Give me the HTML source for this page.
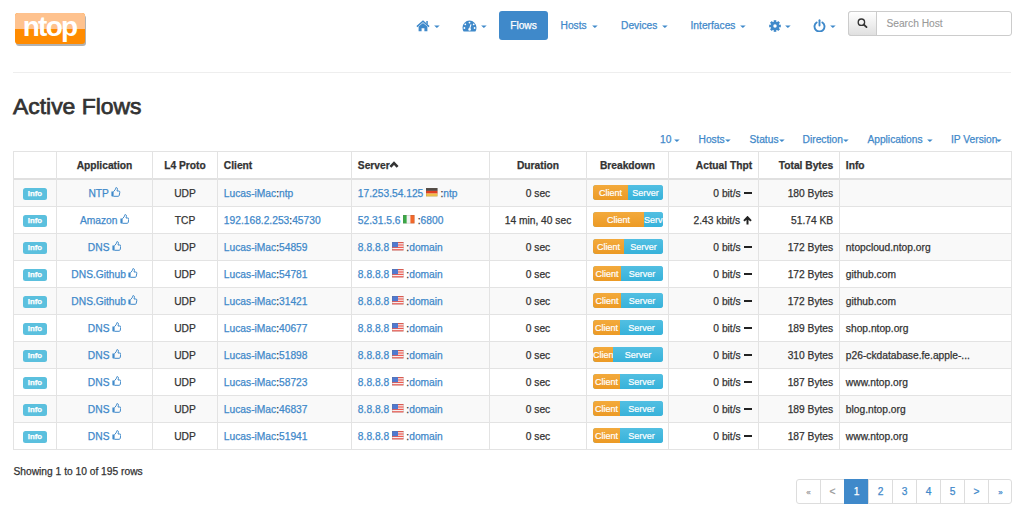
<!DOCTYPE html>
<html><head><meta charset="utf-8"><style>
html,body{margin:0;padding:0;background:#fff;width:1024px;height:511px;overflow:hidden;position:relative;font-family:"Liberation Sans",sans-serif}
.t{position:absolute;white-space:nowrap;-webkit-text-stroke:0.25px currentColor}
.r{position:absolute}
.lbl{position:absolute;width:24px;height:12.4px;border-radius:2.5px;background:#5bc0de;color:#fff;font-weight:bold;font-size:7.8px;line-height:12.4px;-webkit-text-stroke:0.25px #fff;text-align:center;font-family:"Liberation Sans",sans-serif}
.flag{display:inline-block;position:relative;width:11.5px;height:8.4px;vertical-align:1.3px;border-radius:1px;box-shadow:0 0 0 0.5px rgba(120,110,100,.35)}
.minus{display:inline-block;width:8px;height:2.4px;background:#222;vertical-align:2.5px;margin-left:3.5px}
.bar{position:absolute;width:70px;height:14.7px;border-radius:3px;overflow:hidden;background:#5bc0de}
.cli,.srv{position:absolute;top:0;height:14.7px;overflow:hidden;color:#fff;font-size:9px;line-height:16px;-webkit-text-stroke:0.2px #fff;text-align:center;white-space:nowrap}
.cli{left:0;background:linear-gradient(#f3aa3c,#ec9a25)}
.srv{background:linear-gradient(#52bfe2,#37b2da)}
.cli span,.srv span{display:inline-block}
</style></head><body>
<div class="r" style="left:16.3px;top:14.6px;width:70px;height:31px;border-radius:3px;background:#8a8a8a;filter:blur(0.6px);opacity:.65"></div>
<div class="r" style="left:15px;top:13px;width:70px;height:31px;border-radius:3px;overflow:hidden;background:#ff8b00">
<div class="r" style="left:0;top:0;width:70px;height:16px;background:#fec28e"></div>
<div class="t" style="left:7.6px;top:-3.2px;width:54px;font-size:28px;line-height:34px;font-weight:bold;color:#fff;letter-spacing:-1.7px;text-align:center;-webkit-text-stroke:0">ntop</div>
</div><div class="r" style="left:499px;top:11px;width:49px;height:29px;border-radius:3px;background:#3f89ca"></div><div class="t" style="left:493.50px;width:60px;text-align:center;top:16.15px;font-size:10.24px;line-height:20px;color:#fff;font-weight:normal;">Flows</div><div class="t" style="left:560.50px;top:16.15px;font-size:10.24px;line-height:20px;color:#3f89ca;font-weight:normal;">Hosts</div><div class="t" style="left:621.00px;top:16.15px;font-size:10.24px;line-height:20px;color:#3f89ca;font-weight:normal;">Devices</div><div class="t" style="left:690.50px;top:16.15px;font-size:10.24px;line-height:20px;color:#3f89ca;font-weight:normal;">Interfaces</div><svg class="r" style="left:433.8px;top:25px" width="6" height="4" viewBox="0 0 6 4"><path d="M0.1 0.4 H5.7 L2.9 3.1 Z" fill="#3f89ca"/></svg><svg class="r" style="left:481.3px;top:25px" width="6" height="4" viewBox="0 0 6 4"><path d="M0.1 0.4 H5.7 L2.9 3.1 Z" fill="#3f89ca"/></svg><svg class="r" style="left:591.5px;top:25px" width="6" height="4" viewBox="0 0 6 4"><path d="M0.1 0.4 H5.7 L2.9 3.1 Z" fill="#3f89ca"/></svg><svg class="r" style="left:661.8px;top:25px" width="6" height="4" viewBox="0 0 6 4"><path d="M0.1 0.4 H5.7 L2.9 3.1 Z" fill="#3f89ca"/></svg><svg class="r" style="left:739.5999999999999px;top:25px" width="6" height="4" viewBox="0 0 6 4"><path d="M0.1 0.4 H5.7 L2.9 3.1 Z" fill="#3f89ca"/></svg><svg class="r" style="left:785.0px;top:25px" width="6" height="4" viewBox="0 0 6 4"><path d="M0.1 0.4 H5.7 L2.9 3.1 Z" fill="#3f89ca"/></svg><svg class="r" style="left:830.0999999999999px;top:25px" width="6" height="4" viewBox="0 0 6 4"><path d="M0.1 0.4 H5.7 L2.9 3.1 Z" fill="#3f89ca"/></svg><svg class="r" style="left:416px;top:20px" width="14" height="12" viewBox="0 0 14 12">
<path d="M0.9 6.6 L7 1.3 L13.1 6.6" stroke="#3f89ca" stroke-width="1.5" fill="none" stroke-linejoin="miter"/>
<path d="M10.3 1 H11.8 V4.6 L10.3 3.3 Z" fill="#3f89ca"/>
<path d="M2.6 6.6 L7 2.9 L11.4 6.6 V11.3 H8.4 V8.3 H5.6 V11.3 H2.6 Z" fill="#3f89ca"/></svg><svg class="r" style="left:462px;top:20px" width="15" height="12" viewBox="0 0 15 12">
<path d="M7.5 0.6 A7 7 0 0 0 0.5 7.6 Q0.5 9.8 1.6 11.4 H13.4 Q14.5 9.8 14.5 7.6 A7 7 0 0 0 7.5 0.6 Z" fill="#3f89ca"/>
<circle cx="7.5" cy="2.6" r="0.9" fill="#fff"/><circle cx="3.3" cy="4.3" r="0.9" fill="#fff"/><circle cx="11.7" cy="4.3" r="0.9" fill="#fff"/>
<circle cx="2.4" cy="8" r="0.9" fill="#fff"/><circle cx="12.6" cy="8" r="0.9" fill="#fff"/>
<path d="M9.0 4.3 L7.7 8.6" stroke="#fff" stroke-width="1.1"/><circle cx="7.6" cy="9.4" r="1.3" fill="#fff"/></svg><svg class="r" style="left:768.5px;top:19.8px" width="12" height="12" viewBox="-6.5 -6.5 13 13">
<g fill="#3f89ca"><rect x="-1.4" y="-6.3" width="2.8" height="3" transform="rotate(0)"/><rect x="-1.4" y="-6.3" width="2.8" height="3" transform="rotate(45)"/><rect x="-1.4" y="-6.3" width="2.8" height="3" transform="rotate(90)"/><rect x="-1.4" y="-6.3" width="2.8" height="3" transform="rotate(135)"/><rect x="-1.4" y="-6.3" width="2.8" height="3" transform="rotate(180)"/><rect x="-1.4" y="-6.3" width="2.8" height="3" transform="rotate(225)"/><rect x="-1.4" y="-6.3" width="2.8" height="3" transform="rotate(270)"/><rect x="-1.4" y="-6.3" width="2.8" height="3" transform="rotate(315)"/>
<circle r="4.6"/></g><circle r="1.9" fill="#fff"/></svg><svg class="r" style="left:813px;top:19px" width="13" height="13" viewBox="0 0 13 13">
<path d="M3.6 3.4 A5 5 0 1 0 9.4 3.4" stroke="#3f89ca" stroke-width="1.9" fill="none" stroke-linecap="round"/>
<path d="M6.5 1.2 V6.6" stroke="#3f89ca" stroke-width="1.9" stroke-linecap="round"/></svg><div class="r" style="left:848px;top:11px;width:164px;height:25px;border:1px solid #ccc;border-radius:3px;box-sizing:border-box;background:#fff"></div>
<div class="r" style="left:848px;top:11px;width:29px;height:25px;border:1px solid #ccc;border-radius:3px 0 0 3px;box-sizing:border-box;background:linear-gradient(#fff,#e0e0e0)"></div><svg class="r" style="left:857px;top:18px" width="11" height="10" viewBox="0 0 11 10">
<circle cx="4.4" cy="4.2" r="3.2" stroke="#333" stroke-width="1.35" fill="none"/><path d="M6.7 6.5 L9.5 9.1" stroke="#333" stroke-width="1.8" stroke-linecap="round"/></svg><div class="t" style="left:886.40px;top:14.05px;font-size:10.24px;line-height:20px;color:#999;font-weight:normal;-webkit-text-stroke:0.1px #999;">Search Host</div><div class="r" style="left:13px;top:72px;width:998px;height:1px;background:#eee;"></div><div class="t" style="left:13.00px;top:96.07px;font-size:22.9px;line-height:20px;color:#333;font-weight:normal;-webkit-text-stroke:0.75px #333;">Active Flows</div><div class="t" style="left:660.00px;top:129.55px;font-size:10.24px;line-height:20px;color:#3f89ca;font-weight:normal;">10</div><svg class="r" style="left:673.8px;top:138.5px" width="6" height="4" viewBox="0 0 6 4"><path d="M0.1 0.4 H5.7 L2.9 3.1 Z" fill="#3f89ca"/></svg><div class="t" style="left:698.50px;top:129.55px;font-size:10.24px;line-height:20px;color:#3f89ca;font-weight:normal;">Hosts</div><svg class="r" style="left:724.8px;top:138.5px" width="6" height="4" viewBox="0 0 6 4"><path d="M0.1 0.4 H5.7 L2.9 3.1 Z" fill="#3f89ca"/></svg><div class="t" style="left:749.50px;top:129.55px;font-size:10.24px;line-height:20px;color:#3f89ca;font-weight:normal;">Status</div><svg class="r" style="left:778.8px;top:138.5px" width="6" height="4" viewBox="0 0 6 4"><path d="M0.1 0.4 H5.7 L2.9 3.1 Z" fill="#3f89ca"/></svg><div class="t" style="left:802.60px;top:129.55px;font-size:10.24px;line-height:20px;color:#3f89ca;font-weight:normal;">Direction</div><svg class="r" style="left:843.3px;top:138.5px" width="6" height="4" viewBox="0 0 6 4"><path d="M0.1 0.4 H5.7 L2.9 3.1 Z" fill="#3f89ca"/></svg><div class="t" style="left:867.40px;top:129.55px;font-size:10.24px;line-height:20px;color:#3f89ca;font-weight:normal;">Applications</div><svg class="r" style="left:926.8px;top:138.5px" width="6" height="4" viewBox="0 0 6 4"><path d="M0.1 0.4 H5.7 L2.9 3.1 Z" fill="#3f89ca"/></svg><div class="t" style="left:951.00px;top:129.55px;font-size:10.24px;line-height:20px;color:#3f89ca;font-weight:normal;">IP Version</div><svg class="r" style="left:995.8px;top:138.5px" width="6" height="4" viewBox="0 0 6 4"><path d="M0.1 0.4 H5.7 L2.9 3.1 Z" fill="#3f89ca"/></svg><div class="r" style="left:14px;top:180px;width:997px;height:26px;background:#f9f9f9;"></div><div class="r" style="left:14px;top:234px;width:997px;height:26px;background:#f9f9f9;"></div><div class="r" style="left:14px;top:288px;width:997px;height:26px;background:#f9f9f9;"></div><div class="r" style="left:14px;top:342px;width:997px;height:26px;background:#f9f9f9;"></div><div class="r" style="left:14px;top:396px;width:997px;height:26px;background:#f9f9f9;"></div><div class="r" style="left:13px;top:151px;width:999px;height:1px;background:#e3e3e3;"></div><div class="r" style="left:13px;top:178px;width:999px;height:2px;background:#e0e0e0;"></div><div class="r" style="left:13px;top:206px;width:999px;height:1px;background:#e3e3e3;"></div><div class="r" style="left:13px;top:233px;width:999px;height:1px;background:#e3e3e3;"></div><div class="r" style="left:13px;top:260px;width:999px;height:1px;background:#e3e3e3;"></div><div class="r" style="left:13px;top:287px;width:999px;height:1px;background:#e3e3e3;"></div><div class="r" style="left:13px;top:314px;width:999px;height:1px;background:#e3e3e3;"></div><div class="r" style="left:13px;top:341px;width:999px;height:1px;background:#e3e3e3;"></div><div class="r" style="left:13px;top:368px;width:999px;height:1px;background:#e3e3e3;"></div><div class="r" style="left:13px;top:395px;width:999px;height:1px;background:#e3e3e3;"></div><div class="r" style="left:13px;top:422px;width:999px;height:1px;background:#e3e3e3;"></div><div class="r" style="left:13px;top:449px;width:999px;height:1px;background:#e3e3e3;"></div><div class="r" style="left:13px;top:151px;width:1px;height:299px;background:#e3e3e3;"></div><div class="r" style="left:56px;top:151px;width:1px;height:299px;background:#e3e3e3;"></div><div class="r" style="left:152px;top:151px;width:1px;height:299px;background:#e3e3e3;"></div><div class="r" style="left:217px;top:151px;width:1px;height:299px;background:#e3e3e3;"></div><div class="r" style="left:351px;top:151px;width:1px;height:299px;background:#e3e3e3;"></div><div class="r" style="left:489px;top:151px;width:1px;height:299px;background:#e3e3e3;"></div><div class="r" style="left:586px;top:151px;width:1px;height:299px;background:#e3e3e3;"></div><div class="r" style="left:668px;top:151px;width:1px;height:299px;background:#e3e3e3;"></div><div class="r" style="left:758px;top:151px;width:1px;height:299px;background:#e3e3e3;"></div><div class="r" style="left:839px;top:151px;width:1px;height:299px;background:#e3e3e3;"></div><div class="r" style="left:1011px;top:151px;width:1px;height:299px;background:#e3e3e3;"></div><div class="t" style="left:44.50px;width:120px;text-align:center;top:155.75px;font-size:10.24px;line-height:20px;color:#333;font-weight:bold;">Application</div><div class="t" style="left:125.00px;width:120px;text-align:center;top:155.75px;font-size:10.24px;line-height:20px;color:#333;font-weight:bold;">L4 Proto</div><div class="t" style="left:223.85px;top:155.75px;font-size:10.24px;line-height:20px;color:#333;font-weight:bold;">Client</div><div class="t" style="left:357.85px;top:155.75px;font-size:10.24px;line-height:20px;color:#333;font-weight:bold;">Server</div><svg class="r" style="left:389px;top:160px" width="10" height="9" viewBox="0 0 10 9"><path d="M1.4 6.9 L5 3.1 L8.6 6.9" stroke="#333" stroke-width="2.6" fill="none"/></svg><div class="t" style="left:478.00px;width:120px;text-align:center;top:155.75px;font-size:10.24px;line-height:20px;color:#333;font-weight:bold;">Duration</div><div class="t" style="left:567.50px;width:120px;text-align:center;top:155.75px;font-size:10.24px;line-height:20px;color:#333;font-weight:bold;">Breakdown</div><div class="t" style="right:271.85px;text-align:right;top:155.75px;font-size:10.24px;line-height:20px;color:#333;font-weight:bold;">Actual Thpt</div><div class="t" style="right:190.85px;text-align:right;top:155.75px;font-size:10.24px;line-height:20px;color:#333;font-weight:bold;">Total Bytes</div><div class="t" style="left:845.85px;top:155.75px;font-size:10.24px;line-height:20px;color:#333;font-weight:bold;">Info</div><div class="lbl" style="left:23px;top:187.6px">Info</div><div class="t" style="left:44.50px;width:120px;text-align:center;top:183.75px;font-size:10.24px;line-height:20px;color:#3f89ca;font-weight:normal;">NTP<svg width="9.5" height="10" viewBox="0 0 9.5 10" style="vertical-align:0px;margin-left:2.2px"><path d="M2.5 4.7 L4.1 2.8 Q4.7 2.0 4.7 1.2 Q4.7 0.5 5.4 0.6 Q6.7 0.9 6.4 2.5 L6.0 4.0 H7.9 Q9.0 4.1 8.8 5.3 L8.2 8.5 Q8.0 9.3 7.1 9.3 H2.5" stroke="#3f89ca" stroke-width="1" fill="none" stroke-linejoin="round"/><path d="M0.4 4.4 H2.6 V9.5 H1.2 Q0.4 9.5 0.4 8.7 Z" fill="#3f89ca"/></svg></div><div class="t" style="left:145.00px;width:80px;text-align:center;top:183.75px;font-size:10.24px;line-height:20px;color:#333;font-weight:normal;">UDP</div><div class="t" style="left:223.85px;top:183.75px;font-size:10.24px;line-height:20px;color:#333;font-weight:normal;"><span style="color:#3f89ca">Lucas-iMac</span>:<span style="color:#3f89ca">ntp</span></div><div class="t" style="left:357.85px;top:183.75px;font-size:10.24px;line-height:20px;color:#333;font-weight:normal;"><span style="color:#3f89ca">17.253.54.125</span> <svg width="11.5" height="8.4" viewBox="0 0 11.5 8.4" style="vertical-align:0px"><rect x="0" y="0" width="11.5" height="2.9" fill="#514a45"/><rect x="0" y="2.9" width="11.5" height="2.7" fill="#e23f22"/><rect x="0" y="5.6" width="11.5" height="2.8" fill="#f0c04a"/><rect x="0.25" y="0.25" width="11" height="7.9" fill="none" stroke="rgba(110,100,90,.35)" stroke-width="0.5"/></svg> :<span style="color:#3f89ca">ntp</span></div><div class="t" style="left:478.00px;width:120px;text-align:center;top:183.75px;font-size:10.24px;line-height:20px;color:#333;font-weight:normal;">0 sec</div><div class="bar" style="left:593px;top:185.3px"><div class="cli" style="width:35px"><span>Client</span></div><div class="srv" style="left:35px;width:35px"><span>Server</span></div></div><div class="t" style="right:271.85px;text-align:right;top:183.75px;font-size:10.24px;line-height:20px;color:#333;font-weight:normal;">0 bit/s<span class="minus"></span></div><div class="t" style="right:190.85px;text-align:right;top:183.75px;font-size:10.24px;line-height:20px;color:#333;font-weight:normal;">180 Bytes</div><div class="t" style="left:845.85px;top:183.75px;font-size:10.24px;line-height:20px;color:#333;font-weight:normal;"></div><div class="lbl" style="left:23px;top:214.6px">Info</div><div class="t" style="left:44.50px;width:120px;text-align:center;top:210.75px;font-size:10.24px;line-height:20px;color:#3f89ca;font-weight:normal;">Amazon<svg width="9.5" height="10" viewBox="0 0 9.5 10" style="vertical-align:0px;margin-left:2.2px"><path d="M2.5 4.7 L4.1 2.8 Q4.7 2.0 4.7 1.2 Q4.7 0.5 5.4 0.6 Q6.7 0.9 6.4 2.5 L6.0 4.0 H7.9 Q9.0 4.1 8.8 5.3 L8.2 8.5 Q8.0 9.3 7.1 9.3 H2.5" stroke="#3f89ca" stroke-width="1" fill="none" stroke-linejoin="round"/><path d="M0.4 4.4 H2.6 V9.5 H1.2 Q0.4 9.5 0.4 8.7 Z" fill="#3f89ca"/></svg></div><div class="t" style="left:145.00px;width:80px;text-align:center;top:210.75px;font-size:10.24px;line-height:20px;color:#333;font-weight:normal;">TCP</div><div class="t" style="left:223.85px;top:210.75px;font-size:10.24px;line-height:20px;color:#333;font-weight:normal;"><span style="color:#3f89ca">192.168.2.253</span>:<span style="color:#3f89ca">45730</span></div><div class="t" style="left:357.85px;top:210.75px;font-size:10.24px;line-height:20px;color:#333;font-weight:normal;"><span style="color:#3f89ca">52.31.5.6</span> <svg width="11.5" height="8.4" viewBox="0 0 11.5 8.4" style="vertical-align:0px"><rect x="0" y="0" width="3.8" height="8.4" fill="#3aa845"/><rect x="3.8" y="0" width="3.6" height="8.4" fill="#f2f2f2"/><rect x="7.4" y="0" width="4.1" height="8.4" fill="#f2672a"/><rect x="0.25" y="0.25" width="11" height="7.9" fill="none" stroke="rgba(110,100,90,.35)" stroke-width="0.5"/></svg> :<span style="color:#3f89ca">6800</span></div><div class="t" style="left:478.00px;width:120px;text-align:center;top:210.75px;font-size:10.24px;line-height:20px;color:#333;font-weight:normal;">14 min, 40 sec</div><div class="bar" style="left:593px;top:212.3px"><div class="cli" style="width:51px"><span>Client</span></div><div class="srv" style="left:51px;width:19px"><span>Server</span></div></div><div class="t" style="right:271.85px;text-align:right;top:210.75px;font-size:10.24px;line-height:20px;color:#333;font-weight:normal;">2.43 kbit/s<svg width="9" height="9" viewBox="0 0 9 9" style="vertical-align:-1px;margin-left:3px"><path d="M4.5 8.6 V1.8 M1 4.9 L4.5 1.2 L8 4.9" stroke="#222" stroke-width="2" fill="none"/></svg></div><div class="t" style="right:190.85px;text-align:right;top:210.75px;font-size:10.24px;line-height:20px;color:#333;font-weight:normal;">51.74 KB</div><div class="t" style="left:845.85px;top:210.75px;font-size:10.24px;line-height:20px;color:#333;font-weight:normal;"></div><div class="lbl" style="left:23px;top:241.6px">Info</div><div class="t" style="left:44.50px;width:120px;text-align:center;top:237.75px;font-size:10.24px;line-height:20px;color:#3f89ca;font-weight:normal;">DNS<svg width="9.5" height="10" viewBox="0 0 9.5 10" style="vertical-align:0px;margin-left:2.2px"><path d="M2.5 4.7 L4.1 2.8 Q4.7 2.0 4.7 1.2 Q4.7 0.5 5.4 0.6 Q6.7 0.9 6.4 2.5 L6.0 4.0 H7.9 Q9.0 4.1 8.8 5.3 L8.2 8.5 Q8.0 9.3 7.1 9.3 H2.5" stroke="#3f89ca" stroke-width="1" fill="none" stroke-linejoin="round"/><path d="M0.4 4.4 H2.6 V9.5 H1.2 Q0.4 9.5 0.4 8.7 Z" fill="#3f89ca"/></svg></div><div class="t" style="left:145.00px;width:80px;text-align:center;top:237.75px;font-size:10.24px;line-height:20px;color:#333;font-weight:normal;">UDP</div><div class="t" style="left:223.85px;top:237.75px;font-size:10.24px;line-height:20px;color:#333;font-weight:normal;"><span style="color:#3f89ca">Lucas-iMac</span>:<span style="color:#3f89ca">54859</span></div><div class="t" style="left:357.85px;top:237.75px;font-size:10.24px;line-height:20px;color:#333;font-weight:normal;"><span style="color:#3f89ca">8.8.8.8</span> <svg width="11.5" height="8.4" viewBox="0 0 11.5 8.4" style="vertical-align:0px"><rect x="0" y="0" width="11.5" height="8.4" fill="#f6eeee"/><rect x="0" y="0" width="11.5" height="1.2" fill="#ee5a50"/><rect x="0" y="2.4" width="11.5" height="1.2" fill="#ee5a50"/><rect x="0" y="4.8" width="11.5" height="1.2" fill="#ee5a50"/><rect x="0" y="7.2" width="11.5" height="1.2" fill="#ee5a50"/><rect x="0" y="0" width="6" height="5.2" fill="#5079d0"/><rect x="0.25" y="0.25" width="11" height="7.9" fill="none" stroke="rgba(110,100,90,.35)" stroke-width="0.5"/></svg> :<span style="color:#3f89ca">domain</span></div><div class="t" style="left:478.00px;width:120px;text-align:center;top:237.75px;font-size:10.24px;line-height:20px;color:#333;font-weight:normal;">0 sec</div><div class="bar" style="left:593px;top:239.3px"><div class="cli" style="width:31px"><span>Client</span></div><div class="srv" style="left:31px;width:39px"><span>Server</span></div></div><div class="t" style="right:271.85px;text-align:right;top:237.75px;font-size:10.24px;line-height:20px;color:#333;font-weight:normal;">0 bit/s<span class="minus"></span></div><div class="t" style="right:190.85px;text-align:right;top:237.75px;font-size:10.24px;line-height:20px;color:#333;font-weight:normal;">172 Bytes</div><div class="t" style="left:845.85px;top:237.75px;font-size:10.24px;line-height:20px;color:#333;font-weight:normal;">ntopcloud.ntop.org</div><div class="lbl" style="left:23px;top:268.6px">Info</div><div class="t" style="left:44.50px;width:120px;text-align:center;top:264.75px;font-size:10.24px;line-height:20px;color:#3f89ca;font-weight:normal;">DNS.Github<svg width="9.5" height="10" viewBox="0 0 9.5 10" style="vertical-align:0px;margin-left:2.2px"><path d="M2.5 4.7 L4.1 2.8 Q4.7 2.0 4.7 1.2 Q4.7 0.5 5.4 0.6 Q6.7 0.9 6.4 2.5 L6.0 4.0 H7.9 Q9.0 4.1 8.8 5.3 L8.2 8.5 Q8.0 9.3 7.1 9.3 H2.5" stroke="#3f89ca" stroke-width="1" fill="none" stroke-linejoin="round"/><path d="M0.4 4.4 H2.6 V9.5 H1.2 Q0.4 9.5 0.4 8.7 Z" fill="#3f89ca"/></svg></div><div class="t" style="left:145.00px;width:80px;text-align:center;top:264.75px;font-size:10.24px;line-height:20px;color:#333;font-weight:normal;">UDP</div><div class="t" style="left:223.85px;top:264.75px;font-size:10.24px;line-height:20px;color:#333;font-weight:normal;"><span style="color:#3f89ca">Lucas-iMac</span>:<span style="color:#3f89ca">54781</span></div><div class="t" style="left:357.85px;top:264.75px;font-size:10.24px;line-height:20px;color:#333;font-weight:normal;"><span style="color:#3f89ca">8.8.8.8</span> <svg width="11.5" height="8.4" viewBox="0 0 11.5 8.4" style="vertical-align:0px"><rect x="0" y="0" width="11.5" height="8.4" fill="#f6eeee"/><rect x="0" y="0" width="11.5" height="1.2" fill="#ee5a50"/><rect x="0" y="2.4" width="11.5" height="1.2" fill="#ee5a50"/><rect x="0" y="4.8" width="11.5" height="1.2" fill="#ee5a50"/><rect x="0" y="7.2" width="11.5" height="1.2" fill="#ee5a50"/><rect x="0" y="0" width="6" height="5.2" fill="#5079d0"/><rect x="0.25" y="0.25" width="11" height="7.9" fill="none" stroke="rgba(110,100,90,.35)" stroke-width="0.5"/></svg> :<span style="color:#3f89ca">domain</span></div><div class="t" style="left:478.00px;width:120px;text-align:center;top:264.75px;font-size:10.24px;line-height:20px;color:#333;font-weight:normal;">0 sec</div><div class="bar" style="left:593px;top:266.3px"><div class="cli" style="width:28px"><span>Client</span></div><div class="srv" style="left:28px;width:42px"><span>Server</span></div></div><div class="t" style="right:271.85px;text-align:right;top:264.75px;font-size:10.24px;line-height:20px;color:#333;font-weight:normal;">0 bit/s<span class="minus"></span></div><div class="t" style="right:190.85px;text-align:right;top:264.75px;font-size:10.24px;line-height:20px;color:#333;font-weight:normal;">172 Bytes</div><div class="t" style="left:845.85px;top:264.75px;font-size:10.24px;line-height:20px;color:#333;font-weight:normal;">github.com</div><div class="lbl" style="left:23px;top:295.6px">Info</div><div class="t" style="left:44.50px;width:120px;text-align:center;top:291.75px;font-size:10.24px;line-height:20px;color:#3f89ca;font-weight:normal;">DNS.Github<svg width="9.5" height="10" viewBox="0 0 9.5 10" style="vertical-align:0px;margin-left:2.2px"><path d="M2.5 4.7 L4.1 2.8 Q4.7 2.0 4.7 1.2 Q4.7 0.5 5.4 0.6 Q6.7 0.9 6.4 2.5 L6.0 4.0 H7.9 Q9.0 4.1 8.8 5.3 L8.2 8.5 Q8.0 9.3 7.1 9.3 H2.5" stroke="#3f89ca" stroke-width="1" fill="none" stroke-linejoin="round"/><path d="M0.4 4.4 H2.6 V9.5 H1.2 Q0.4 9.5 0.4 8.7 Z" fill="#3f89ca"/></svg></div><div class="t" style="left:145.00px;width:80px;text-align:center;top:291.75px;font-size:10.24px;line-height:20px;color:#333;font-weight:normal;">UDP</div><div class="t" style="left:223.85px;top:291.75px;font-size:10.24px;line-height:20px;color:#333;font-weight:normal;"><span style="color:#3f89ca">Lucas-iMac</span>:<span style="color:#3f89ca">31421</span></div><div class="t" style="left:357.85px;top:291.75px;font-size:10.24px;line-height:20px;color:#333;font-weight:normal;"><span style="color:#3f89ca">8.8.8.8</span> <svg width="11.5" height="8.4" viewBox="0 0 11.5 8.4" style="vertical-align:0px"><rect x="0" y="0" width="11.5" height="8.4" fill="#f6eeee"/><rect x="0" y="0" width="11.5" height="1.2" fill="#ee5a50"/><rect x="0" y="2.4" width="11.5" height="1.2" fill="#ee5a50"/><rect x="0" y="4.8" width="11.5" height="1.2" fill="#ee5a50"/><rect x="0" y="7.2" width="11.5" height="1.2" fill="#ee5a50"/><rect x="0" y="0" width="6" height="5.2" fill="#5079d0"/><rect x="0.25" y="0.25" width="11" height="7.9" fill="none" stroke="rgba(110,100,90,.35)" stroke-width="0.5"/></svg> :<span style="color:#3f89ca">domain</span></div><div class="t" style="left:478.00px;width:120px;text-align:center;top:291.75px;font-size:10.24px;line-height:20px;color:#333;font-weight:normal;">0 sec</div><div class="bar" style="left:593px;top:293.3px"><div class="cli" style="width:28px"><span>Client</span></div><div class="srv" style="left:28px;width:42px"><span>Server</span></div></div><div class="t" style="right:271.85px;text-align:right;top:291.75px;font-size:10.24px;line-height:20px;color:#333;font-weight:normal;">0 bit/s<span class="minus"></span></div><div class="t" style="right:190.85px;text-align:right;top:291.75px;font-size:10.24px;line-height:20px;color:#333;font-weight:normal;">172 Bytes</div><div class="t" style="left:845.85px;top:291.75px;font-size:10.24px;line-height:20px;color:#333;font-weight:normal;">github.com</div><div class="lbl" style="left:23px;top:322.6px">Info</div><div class="t" style="left:44.50px;width:120px;text-align:center;top:318.75px;font-size:10.24px;line-height:20px;color:#3f89ca;font-weight:normal;">DNS<svg width="9.5" height="10" viewBox="0 0 9.5 10" style="vertical-align:0px;margin-left:2.2px"><path d="M2.5 4.7 L4.1 2.8 Q4.7 2.0 4.7 1.2 Q4.7 0.5 5.4 0.6 Q6.7 0.9 6.4 2.5 L6.0 4.0 H7.9 Q9.0 4.1 8.8 5.3 L8.2 8.5 Q8.0 9.3 7.1 9.3 H2.5" stroke="#3f89ca" stroke-width="1" fill="none" stroke-linejoin="round"/><path d="M0.4 4.4 H2.6 V9.5 H1.2 Q0.4 9.5 0.4 8.7 Z" fill="#3f89ca"/></svg></div><div class="t" style="left:145.00px;width:80px;text-align:center;top:318.75px;font-size:10.24px;line-height:20px;color:#333;font-weight:normal;">UDP</div><div class="t" style="left:223.85px;top:318.75px;font-size:10.24px;line-height:20px;color:#333;font-weight:normal;"><span style="color:#3f89ca">Lucas-iMac</span>:<span style="color:#3f89ca">40677</span></div><div class="t" style="left:357.85px;top:318.75px;font-size:10.24px;line-height:20px;color:#333;font-weight:normal;"><span style="color:#3f89ca">8.8.8.8</span> <svg width="11.5" height="8.4" viewBox="0 0 11.5 8.4" style="vertical-align:0px"><rect x="0" y="0" width="11.5" height="8.4" fill="#f6eeee"/><rect x="0" y="0" width="11.5" height="1.2" fill="#ee5a50"/><rect x="0" y="2.4" width="11.5" height="1.2" fill="#ee5a50"/><rect x="0" y="4.8" width="11.5" height="1.2" fill="#ee5a50"/><rect x="0" y="7.2" width="11.5" height="1.2" fill="#ee5a50"/><rect x="0" y="0" width="6" height="5.2" fill="#5079d0"/><rect x="0.25" y="0.25" width="11" height="7.9" fill="none" stroke="rgba(110,100,90,.35)" stroke-width="0.5"/></svg> :<span style="color:#3f89ca">domain</span></div><div class="t" style="left:478.00px;width:120px;text-align:center;top:318.75px;font-size:10.24px;line-height:20px;color:#333;font-weight:normal;">0 sec</div><div class="bar" style="left:593px;top:320.3px"><div class="cli" style="width:27px"><span>Client</span></div><div class="srv" style="left:27px;width:43px"><span>Server</span></div></div><div class="t" style="right:271.85px;text-align:right;top:318.75px;font-size:10.24px;line-height:20px;color:#333;font-weight:normal;">0 bit/s<span class="minus"></span></div><div class="t" style="right:190.85px;text-align:right;top:318.75px;font-size:10.24px;line-height:20px;color:#333;font-weight:normal;">189 Bytes</div><div class="t" style="left:845.85px;top:318.75px;font-size:10.24px;line-height:20px;color:#333;font-weight:normal;">shop.ntop.org</div><div class="lbl" style="left:23px;top:349.6px">Info</div><div class="t" style="left:44.50px;width:120px;text-align:center;top:345.75px;font-size:10.24px;line-height:20px;color:#3f89ca;font-weight:normal;">DNS<svg width="9.5" height="10" viewBox="0 0 9.5 10" style="vertical-align:0px;margin-left:2.2px"><path d="M2.5 4.7 L4.1 2.8 Q4.7 2.0 4.7 1.2 Q4.7 0.5 5.4 0.6 Q6.7 0.9 6.4 2.5 L6.0 4.0 H7.9 Q9.0 4.1 8.8 5.3 L8.2 8.5 Q8.0 9.3 7.1 9.3 H2.5" stroke="#3f89ca" stroke-width="1" fill="none" stroke-linejoin="round"/><path d="M0.4 4.4 H2.6 V9.5 H1.2 Q0.4 9.5 0.4 8.7 Z" fill="#3f89ca"/></svg></div><div class="t" style="left:145.00px;width:80px;text-align:center;top:345.75px;font-size:10.24px;line-height:20px;color:#333;font-weight:normal;">UDP</div><div class="t" style="left:223.85px;top:345.75px;font-size:10.24px;line-height:20px;color:#333;font-weight:normal;"><span style="color:#3f89ca">Lucas-iMac</span>:<span style="color:#3f89ca">51898</span></div><div class="t" style="left:357.85px;top:345.75px;font-size:10.24px;line-height:20px;color:#333;font-weight:normal;"><span style="color:#3f89ca">8.8.8.8</span> <svg width="11.5" height="8.4" viewBox="0 0 11.5 8.4" style="vertical-align:0px"><rect x="0" y="0" width="11.5" height="8.4" fill="#f6eeee"/><rect x="0" y="0" width="11.5" height="1.2" fill="#ee5a50"/><rect x="0" y="2.4" width="11.5" height="1.2" fill="#ee5a50"/><rect x="0" y="4.8" width="11.5" height="1.2" fill="#ee5a50"/><rect x="0" y="7.2" width="11.5" height="1.2" fill="#ee5a50"/><rect x="0" y="0" width="6" height="5.2" fill="#5079d0"/><rect x="0.25" y="0.25" width="11" height="7.9" fill="none" stroke="rgba(110,100,90,.35)" stroke-width="0.5"/></svg> :<span style="color:#3f89ca">domain</span></div><div class="t" style="left:478.00px;width:120px;text-align:center;top:345.75px;font-size:10.24px;line-height:20px;color:#333;font-weight:normal;">0 sec</div><div class="bar" style="left:593px;top:347.3px"><div class="cli" style="width:20px"><span>Client</span></div><div class="srv" style="left:20px;width:50px"><span>Server</span></div></div><div class="t" style="right:271.85px;text-align:right;top:345.75px;font-size:10.24px;line-height:20px;color:#333;font-weight:normal;">0 bit/s<span class="minus"></span></div><div class="t" style="right:190.85px;text-align:right;top:345.75px;font-size:10.24px;line-height:20px;color:#333;font-weight:normal;">310 Bytes</div><div class="t" style="left:845.85px;top:345.75px;font-size:10.24px;line-height:20px;color:#333;font-weight:normal;">p26-ckdatabase.fe.apple-...</div><div class="lbl" style="left:23px;top:376.6px">Info</div><div class="t" style="left:44.50px;width:120px;text-align:center;top:372.75px;font-size:10.24px;line-height:20px;color:#3f89ca;font-weight:normal;">DNS<svg width="9.5" height="10" viewBox="0 0 9.5 10" style="vertical-align:0px;margin-left:2.2px"><path d="M2.5 4.7 L4.1 2.8 Q4.7 2.0 4.7 1.2 Q4.7 0.5 5.4 0.6 Q6.7 0.9 6.4 2.5 L6.0 4.0 H7.9 Q9.0 4.1 8.8 5.3 L8.2 8.5 Q8.0 9.3 7.1 9.3 H2.5" stroke="#3f89ca" stroke-width="1" fill="none" stroke-linejoin="round"/><path d="M0.4 4.4 H2.6 V9.5 H1.2 Q0.4 9.5 0.4 8.7 Z" fill="#3f89ca"/></svg></div><div class="t" style="left:145.00px;width:80px;text-align:center;top:372.75px;font-size:10.24px;line-height:20px;color:#333;font-weight:normal;">UDP</div><div class="t" style="left:223.85px;top:372.75px;font-size:10.24px;line-height:20px;color:#333;font-weight:normal;"><span style="color:#3f89ca">Lucas-iMac</span>:<span style="color:#3f89ca">58723</span></div><div class="t" style="left:357.85px;top:372.75px;font-size:10.24px;line-height:20px;color:#333;font-weight:normal;"><span style="color:#3f89ca">8.8.8.8</span> <svg width="11.5" height="8.4" viewBox="0 0 11.5 8.4" style="vertical-align:0px"><rect x="0" y="0" width="11.5" height="8.4" fill="#f6eeee"/><rect x="0" y="0" width="11.5" height="1.2" fill="#ee5a50"/><rect x="0" y="2.4" width="11.5" height="1.2" fill="#ee5a50"/><rect x="0" y="4.8" width="11.5" height="1.2" fill="#ee5a50"/><rect x="0" y="7.2" width="11.5" height="1.2" fill="#ee5a50"/><rect x="0" y="0" width="6" height="5.2" fill="#5079d0"/><rect x="0.25" y="0.25" width="11" height="7.9" fill="none" stroke="rgba(110,100,90,.35)" stroke-width="0.5"/></svg> :<span style="color:#3f89ca">domain</span></div><div class="t" style="left:478.00px;width:120px;text-align:center;top:372.75px;font-size:10.24px;line-height:20px;color:#333;font-weight:normal;">0 sec</div><div class="bar" style="left:593px;top:374.3px"><div class="cli" style="width:27px"><span>Client</span></div><div class="srv" style="left:27px;width:43px"><span>Server</span></div></div><div class="t" style="right:271.85px;text-align:right;top:372.75px;font-size:10.24px;line-height:20px;color:#333;font-weight:normal;">0 bit/s<span class="minus"></span></div><div class="t" style="right:190.85px;text-align:right;top:372.75px;font-size:10.24px;line-height:20px;color:#333;font-weight:normal;">187 Bytes</div><div class="t" style="left:845.85px;top:372.75px;font-size:10.24px;line-height:20px;color:#333;font-weight:normal;">www.ntop.org</div><div class="lbl" style="left:23px;top:403.6px">Info</div><div class="t" style="left:44.50px;width:120px;text-align:center;top:399.75px;font-size:10.24px;line-height:20px;color:#3f89ca;font-weight:normal;">DNS<svg width="9.5" height="10" viewBox="0 0 9.5 10" style="vertical-align:0px;margin-left:2.2px"><path d="M2.5 4.7 L4.1 2.8 Q4.7 2.0 4.7 1.2 Q4.7 0.5 5.4 0.6 Q6.7 0.9 6.4 2.5 L6.0 4.0 H7.9 Q9.0 4.1 8.8 5.3 L8.2 8.5 Q8.0 9.3 7.1 9.3 H2.5" stroke="#3f89ca" stroke-width="1" fill="none" stroke-linejoin="round"/><path d="M0.4 4.4 H2.6 V9.5 H1.2 Q0.4 9.5 0.4 8.7 Z" fill="#3f89ca"/></svg></div><div class="t" style="left:145.00px;width:80px;text-align:center;top:399.75px;font-size:10.24px;line-height:20px;color:#333;font-weight:normal;">UDP</div><div class="t" style="left:223.85px;top:399.75px;font-size:10.24px;line-height:20px;color:#333;font-weight:normal;"><span style="color:#3f89ca">Lucas-iMac</span>:<span style="color:#3f89ca">46837</span></div><div class="t" style="left:357.85px;top:399.75px;font-size:10.24px;line-height:20px;color:#333;font-weight:normal;"><span style="color:#3f89ca">8.8.8.8</span> <svg width="11.5" height="8.4" viewBox="0 0 11.5 8.4" style="vertical-align:0px"><rect x="0" y="0" width="11.5" height="8.4" fill="#f6eeee"/><rect x="0" y="0" width="11.5" height="1.2" fill="#ee5a50"/><rect x="0" y="2.4" width="11.5" height="1.2" fill="#ee5a50"/><rect x="0" y="4.8" width="11.5" height="1.2" fill="#ee5a50"/><rect x="0" y="7.2" width="11.5" height="1.2" fill="#ee5a50"/><rect x="0" y="0" width="6" height="5.2" fill="#5079d0"/><rect x="0.25" y="0.25" width="11" height="7.9" fill="none" stroke="rgba(110,100,90,.35)" stroke-width="0.5"/></svg> :<span style="color:#3f89ca">domain</span></div><div class="t" style="left:478.00px;width:120px;text-align:center;top:399.75px;font-size:10.24px;line-height:20px;color:#333;font-weight:normal;">0 sec</div><div class="bar" style="left:593px;top:401.3px"><div class="cli" style="width:27px"><span>Client</span></div><div class="srv" style="left:27px;width:43px"><span>Server</span></div></div><div class="t" style="right:271.85px;text-align:right;top:399.75px;font-size:10.24px;line-height:20px;color:#333;font-weight:normal;">0 bit/s<span class="minus"></span></div><div class="t" style="right:190.85px;text-align:right;top:399.75px;font-size:10.24px;line-height:20px;color:#333;font-weight:normal;">189 Bytes</div><div class="t" style="left:845.85px;top:399.75px;font-size:10.24px;line-height:20px;color:#333;font-weight:normal;">blog.ntop.org</div><div class="lbl" style="left:23px;top:430.6px">Info</div><div class="t" style="left:44.50px;width:120px;text-align:center;top:426.75px;font-size:10.24px;line-height:20px;color:#3f89ca;font-weight:normal;">DNS<svg width="9.5" height="10" viewBox="0 0 9.5 10" style="vertical-align:0px;margin-left:2.2px"><path d="M2.5 4.7 L4.1 2.8 Q4.7 2.0 4.7 1.2 Q4.7 0.5 5.4 0.6 Q6.7 0.9 6.4 2.5 L6.0 4.0 H7.9 Q9.0 4.1 8.8 5.3 L8.2 8.5 Q8.0 9.3 7.1 9.3 H2.5" stroke="#3f89ca" stroke-width="1" fill="none" stroke-linejoin="round"/><path d="M0.4 4.4 H2.6 V9.5 H1.2 Q0.4 9.5 0.4 8.7 Z" fill="#3f89ca"/></svg></div><div class="t" style="left:145.00px;width:80px;text-align:center;top:426.75px;font-size:10.24px;line-height:20px;color:#333;font-weight:normal;">UDP</div><div class="t" style="left:223.85px;top:426.75px;font-size:10.24px;line-height:20px;color:#333;font-weight:normal;"><span style="color:#3f89ca">Lucas-iMac</span>:<span style="color:#3f89ca">51941</span></div><div class="t" style="left:357.85px;top:426.75px;font-size:10.24px;line-height:20px;color:#333;font-weight:normal;"><span style="color:#3f89ca">8.8.8.8</span> <svg width="11.5" height="8.4" viewBox="0 0 11.5 8.4" style="vertical-align:0px"><rect x="0" y="0" width="11.5" height="8.4" fill="#f6eeee"/><rect x="0" y="0" width="11.5" height="1.2" fill="#ee5a50"/><rect x="0" y="2.4" width="11.5" height="1.2" fill="#ee5a50"/><rect x="0" y="4.8" width="11.5" height="1.2" fill="#ee5a50"/><rect x="0" y="7.2" width="11.5" height="1.2" fill="#ee5a50"/><rect x="0" y="0" width="6" height="5.2" fill="#5079d0"/><rect x="0.25" y="0.25" width="11" height="7.9" fill="none" stroke="rgba(110,100,90,.35)" stroke-width="0.5"/></svg> :<span style="color:#3f89ca">domain</span></div><div class="t" style="left:478.00px;width:120px;text-align:center;top:426.75px;font-size:10.24px;line-height:20px;color:#333;font-weight:normal;">0 sec</div><div class="bar" style="left:593px;top:428.3px"><div class="cli" style="width:27px"><span>Client</span></div><div class="srv" style="left:27px;width:43px"><span>Server</span></div></div><div class="t" style="right:271.85px;text-align:right;top:426.75px;font-size:10.24px;line-height:20px;color:#333;font-weight:normal;">0 bit/s<span class="minus"></span></div><div class="t" style="right:190.85px;text-align:right;top:426.75px;font-size:10.24px;line-height:20px;color:#333;font-weight:normal;">187 Bytes</div><div class="t" style="left:845.85px;top:426.75px;font-size:10.24px;line-height:20px;color:#333;font-weight:normal;">www.ntop.org</div><div class="t" style="left:13.50px;top:462.45px;font-size:10.24px;line-height:20px;color:#333;font-weight:normal;">Showing 1 to 10 of 195 rows</div><div class="r" style="left:796px;top:479px;width:216px;height:25px;border:1px solid #ddd;border-radius:3px;box-sizing:border-box"></div><div class="r" style="left:820px;top:479px;width:1px;height:25px;background:#ddd;"></div><div class="r" style="left:844px;top:479px;width:1px;height:25px;background:#ddd;"></div><div class="r" style="left:868px;top:479px;width:1px;height:25px;background:#ddd;"></div><div class="r" style="left:892px;top:479px;width:1px;height:25px;background:#ddd;"></div><div class="r" style="left:916px;top:479px;width:1px;height:25px;background:#ddd;"></div><div class="r" style="left:940px;top:479px;width:1px;height:25px;background:#ddd;"></div><div class="r" style="left:964px;top:479px;width:1px;height:25px;background:#ddd;"></div><div class="r" style="left:988px;top:479px;width:1px;height:25px;background:#ddd;"></div><div class="r" style="left:844px;top:479px;width:24px;height:25px;background:#3f89ca;"></div><div class="t" style="left:796.50px;width:24px;text-align:center;top:483.03px;font-size:8px;line-height:20px;color:#999;font-weight:normal;">&laquo;</div><div class="t" style="left:820.50px;width:24px;text-align:center;top:482.25px;font-size:10.24px;line-height:20px;color:#999;font-weight:normal;">&lt;</div><div class="t" style="left:844.50px;width:24px;text-align:center;top:482.25px;font-size:10.24px;line-height:20px;color:#fff;font-weight:normal;">1</div><div class="t" style="left:868.50px;width:24px;text-align:center;top:482.25px;font-size:10.24px;line-height:20px;color:#3f89ca;font-weight:normal;">2</div><div class="t" style="left:892.50px;width:24px;text-align:center;top:482.25px;font-size:10.24px;line-height:20px;color:#3f89ca;font-weight:normal;">3</div><div class="t" style="left:916.50px;width:24px;text-align:center;top:482.25px;font-size:10.24px;line-height:20px;color:#3f89ca;font-weight:normal;">4</div><div class="t" style="left:940.50px;width:24px;text-align:center;top:482.25px;font-size:10.24px;line-height:20px;color:#3f89ca;font-weight:normal;">5</div><div class="t" style="left:964.50px;width:24px;text-align:center;top:482.25px;font-size:10.24px;line-height:20px;color:#3f89ca;font-weight:normal;">&gt;</div><div class="t" style="left:988.50px;width:24px;text-align:center;top:483.03px;font-size:8px;line-height:20px;color:#3f89ca;font-weight:normal;">&raquo;</div>
</body></html>
